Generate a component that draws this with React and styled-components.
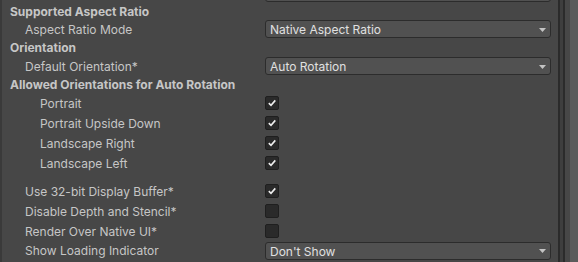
import React from "react";
import styled, { createGlobalStyle } from "styled-components";

const Global = createGlobalStyle`
  html, body { margin: 0; padding: 0; background: #474747; }
  body { width: 578px; height: 262px; overflow: hidden; font-family: Inter, "Noto Sans", sans-serif; }
  #root { height: 262px; }
`;

const Frame = styled.div`
  display: flex;
  height: 262px;
  background: #474747;
`;

const Panel = styled.div`
  flex: 1;
  display: flex;
  flex-direction: column;
  border-left: 2px solid #3a3a3a;
  padding-right: 7px;
  overflow: hidden;
`;

const Divider = styled.div`
  width: 2px;
  background: ${(p) => p.$color || "#2b2b2b"};
`;

const Gap = styled.div`
  width: ${(p) => p.$w}px;
  background: ${(p) => p.$color};
`;

const Track = styled.div`
  width: 8px;
  background: #5b5b5b;
`;

const Row = styled.div`
  display: flex;
  align-items: center;
  height: ${(p) => p.$h || 18}px;
  flex-shrink: 0;
`;

const ClipRow = styled.div`
  display: flex;
  align-items: flex-end;
  height: 2px;
  overflow: hidden;
  flex-shrink: 0;
  padding-left: 263px;
`;

const Label = styled.div`
  width: ${(p) => 263 - p.$indent * 15 - 8}px;
  padding-left: ${(p) => 8 + p.$indent * 15}px;
  padding-top: 1px;
  color: #c6c6c6;
  font-size: 12px;
  white-space: nowrap;
  line-height: 17px;
`;

const Header = styled.div`
  padding-left: 8px;
  padding-top: 1px;
  color: #c6c6c6;
  font-size: 12px;
  font-weight: 700;
  white-space: nowrap;
  line-height: 17px;
`;

const Select = styled.div`
  flex: 1;
  height: 18px;
  box-sizing: border-box;
  display: flex;
  align-items: center;
  justify-content: space-between;
  background: #515151;
  border: 1px solid #2c2c2c;
  border-radius: 3px;
  padding: 1px 4px 0 4px;
  color: #e0e0e0;
  font-size: 12px;
  margin-top: ${(p) => p.$mt || 0}px;
`;

const Arrow = styled.svg`
  width: 7px;
  height: 4px;
  flex-shrink: 0;
`;

const Check = styled.div`
  width: 14px;
  height: 14px;
  box-sizing: border-box;
  background: #2a2a2a;
  border: 1px solid #1f1f1f;
  border-radius: 2px;
  display: flex;
  align-items: center;
  justify-content: center;
`;

const Spacer = styled.div`
  height: ${(p) => p.$h}px;
  flex-shrink: 0;
`;

function Dropdown({ value, mt }) {
  return (
    <Select $mt={mt}>
      <span>{value}</span>
      <Arrow viewBox="0 0 7 4">
        <path d="M0 0 H7 L3.5 4 Z" fill="#c4c4c4" />
      </Arrow>
    </Select>
  );
}

function Checkbox({ checked }) {
  return (
    <Check>
      {checked && (
        <svg width="10" height="10" viewBox="0 0 10 10">
          <path d="M1.8 5.2 L4 7.3 L8.3 2.4" fill="none" stroke="#eeeeee" strokeWidth="1.6" />
        </svg>
      )}
    </Check>
  );
}

const orientations = ["Portrait", "Portrait Upside Down", "Landscape Right", "Landscape Left"];

export default function App() {
  return (
    <>
      <Global />
      <Frame>
        <Panel>
          <ClipRow>
            <Select />
          </ClipRow>
          <Row>
            <Header>Supported Aspect Ratio</Header>
          </Row>
          <Row>
            <Label $indent={1}>Aspect Ratio Mode</Label>
            <Dropdown value="Native Aspect Ratio" />
          </Row>
          <Row>
            <Header>Orientation</Header>
          </Row>
          <Row $h={19}>
            <Label $indent={1}>Default Orientation*</Label>
            <Dropdown value="Auto Rotation" mt={1} />
          </Row>
          <Row>
            <Header>Allowed Orientations for Auto Rotation</Header>
          </Row>
          {orientations.map((o) => (
            <Row key={o} $h={20}>
              <Label $indent={2}>{o}</Label>
              <Checkbox checked />
            </Row>
          ))}
          <Spacer $h={8} />
          <Row $h={20}>
            <Label $indent={1}>Use 32-bit Display Buffer*</Label>
            <Checkbox checked />
          </Row>
          <Row $h={20}>
            <Label $indent={1}>Disable Depth and Stencil*</Label>
            <Checkbox />
          </Row>
          <Row $h={20}>
            <Label $indent={1}>Render Over Native UI*</Label>
            <Checkbox />
          </Row>
          <Row $h={18}>
            <Label $indent={1}>Show Loading Indicator</Label>
            <Dropdown value="Don't Show" mt={1} />
          </Row>
        </Panel>
        <Divider />
        <Gap $w={3} $color="#3e3e3e" />
        <Divider />
        <Gap $w={5} $color="#474747" />
        <Track />
      </Frame>
    </>
  );
}
